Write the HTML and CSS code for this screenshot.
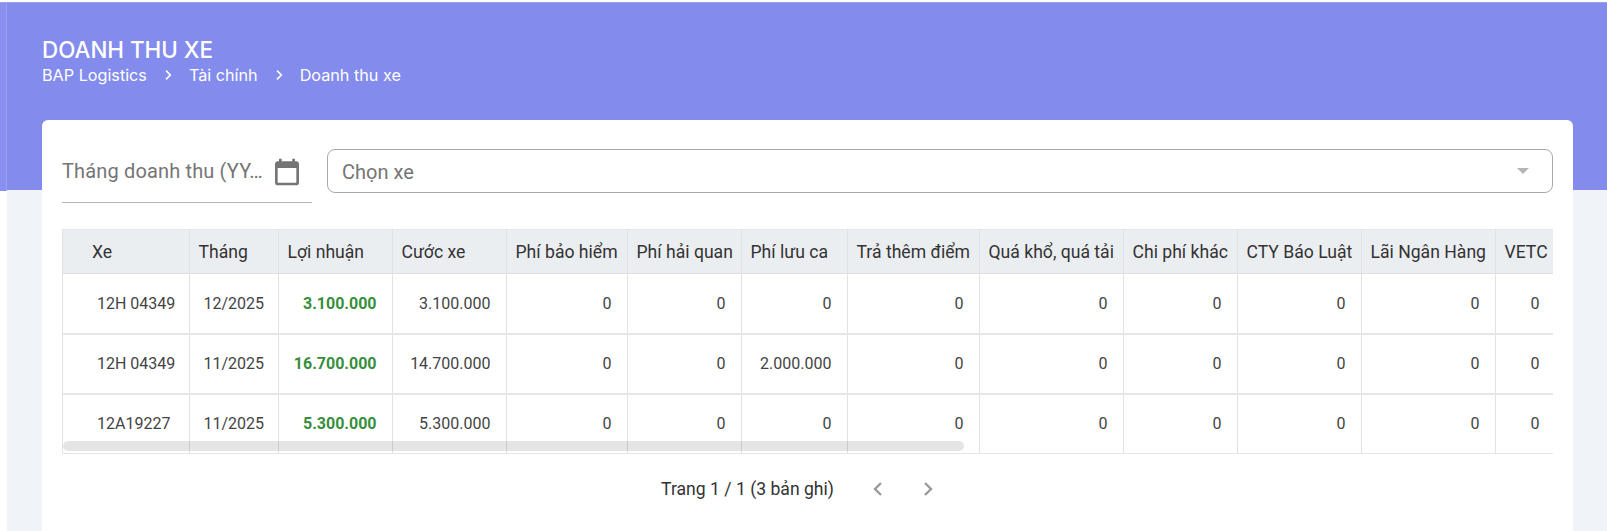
FILE: index.html
```html
<!DOCTYPE html>
<html lang="vi">
<head>
<meta charset="utf-8">
<title>Doanh thu xe</title>
<link rel="stylesheet" href="styles.css">
</head>
<body>
<div class="page">
  <aside class="rail"></aside>
  <main class="main">
    <header class="hero">
      <h1 class="title">DOANH THU XE</h1>
      <nav class="crumbs">
        <span>BAP Logistics</span>
        <svg class="crumb-sep" viewBox="0 0 24 24"><path d="M9 5.5 15.5 12 9 18.5" /></svg>
        <span>Tài chính</span>
        <svg class="crumb-sep" viewBox="0 0 24 24"><path d="M9 5.5 15.5 12 9 18.5" /></svg>
        <span>Doanh thu xe</span>
      </nav>
    </header>
    <section class="card">
      <div class="filters">
        <div class="date-field">
          <span class="date-text">Tháng doanh thu (YY…</span>
          <svg class="cal" viewBox="0 0 24 24"><path d="M19 4h-1V2h-2v2H8V2H6v2H5c-1.1 0-2 .9-2 2v14c0 1.1.9 2 2 2h14c1.1 0 2-.9 2-2V6c0-1.1-.9-2-2-2zm0 16H5V9h14v11z"/></svg>
        </div>
        <div class="select-field">
          <span class="select-text">Chọn xe</span>
          <span class="caret"></span>
        </div>
      </div>
      <div class="table-wrap">
        <table class="grid">
          <colgroup>
            <col class="c1"><col class="c2"><col class="c3"><col class="c4"><col class="c5"><col class="c6"><col class="c7"><col class="c8"><col class="c9"><col class="c10"><col class="c11"><col class="c12"><col class="c13">
          </colgroup>
          <thead>
            <tr>
              <th class="th-xe">Xe</th><th>Tháng</th><th>Lợi nhuận</th><th>Cước xe</th><th>Phí bảo hiểm</th><th>Phí hải quan</th><th>Phí lưu ca</th><th>Trả thêm điểm</th><th>Quá khổ, quá tải</th><th>Chi phí khác</th><th>CTY Báo Luật</th><th>Lãi Ngân Hàng</th><th>VETC</th>
            </tr>
          </thead>
          <tbody>
            <tr>
              <td class="left td-xe">12H 04349</td><td class="left td-month">12/2025</td><td class="profit">3.100.000</td><td>3.100.000</td><td>0</td><td>0</td><td>0</td><td>0</td><td>0</td><td>0</td><td>0</td><td>0</td><td>0</td>
            </tr>
            <tr>
              <td class="left td-xe">12H 04349</td><td class="left td-month">11/2025</td><td class="profit">16.700.000</td><td>14.700.000</td><td>0</td><td>0</td><td>2.000.000</td><td>0</td><td>0</td><td>0</td><td>0</td><td>0</td><td>0</td>
            </tr>
            <tr>
              <td class="left td-xe">12A19227</td><td class="left td-month">11/2025</td><td class="profit">5.300.000</td><td>5.300.000</td><td>0</td><td>0</td><td>0</td><td>0</td><td>0</td><td>0</td><td>0</td><td>0</td><td>0</td>
            </tr>
          </tbody>
        </table>
        <div class="scroll-thumb"></div>
      </div>
      <div class="pager">
        <span class="pager-text">Trang 1 / 1 (3 bản ghi)</span>
        <svg class="pager-btn" viewBox="0 0 24 24"><path d="M15 6 9 12l6 6"/></svg>
        <svg class="pager-btn" viewBox="0 0 24 24"><path d="M9 6l6 6-6 6"/></svg>
      </div>
    </section>
  </main>
</div>
</body>
</html>
```
FILE: styles.css
```css
* { box-sizing: border-box; }
html, body { margin: 0; padding: 0; height: 100%; overflow: hidden; background: #fff; }
body { font-family: Roboto, "Liberation Sans", sans-serif; }
.page { display: flex; height: 531px; padding-top: 2px; }
.rail { width: 7px; flex: none; }
.rail::before { content: ""; display: block; height: 188px; background: #8a90f0; border-right: 1px solid #9aa0f2; border-top: 1px solid #9aa0f2; }
.main { flex: 1; background: linear-gradient(#9aa0f2 0 1px, #838bec 1px 188px, #f0f4f8 188px); padding: 0 34px 0 35px; min-width: 0; }
.hero { height: 118px; padding-top: 36px; color: #fff; font-family: Inter, sans-serif; }
.title { margin: 0; font-size: 22.4px; line-height: 24px; font-weight: 500; }
.crumbs { display: flex; align-items: center; font-size: 16.2px; line-height: 22px; margin-top: 2px; }
.crumb-sep { width: 16px; height: 16px; margin: 0 13px; fill: none; stroke: #fff; stroke-width: 2.4; }
.card { background: #fff; border-radius: 6px 6px 0 0; height: 411px; padding: 29px 20px 0 20px; }
.filters { display: flex; align-items: flex-start; gap: 15px; height: 80px; }
.date-field { width: 250px; height: 54px; flex: none; border-bottom: 1px solid #b5b5b5; display: flex; align-items: center; justify-content: space-between; padding: 0 9px 9px 0; }
.date-text { font-size: 20px; color: #757575; white-space: nowrap; letter-spacing: .15px; }
.cal { width: 32px; height: 32px; fill: #757575; flex: none; margin-top: 2px; }
.select-field { flex: 1; height: 44px; border: 1px solid #a8a8a8; border-radius: 8px; display: flex; align-items: center; justify-content: space-between; padding: 0 23px 0 14px; }
.select-text { font-size: 20px; color: #757575; padding-top: 2px; }
.caret { width: 0; height: 0; border-left: 6.5px solid transparent; border-right: 6.5px solid transparent; border-top: 6.5px solid #b5b5b5; }
.table-wrap { position: relative; height: 225px; overflow: hidden; border-left: 1px solid #e2e2e2; }
.grid { border-collapse: collapse; table-layout: fixed; width: 1492px; font-size: 16px; color: #444; }
.c1 { width: 126px; } .c2 { width: 89px; } .c3 { width: 114px; } .c4 { width: 114px; }
.c5 { width: 121px; } .c6 { width: 114px; } .c7 { width: 106px; } .c8 { width: 132px; }
.c9 { width: 144px; } .c10 { width: 114px; } .c11 { width: 124px; } .c12 { width: 134px; } .c13 { width: 60px; }
.grid th { height: 44px; background: #ebeef1; border-right: 1px solid #dfe2e5; border-top: 1px solid #e6e8ea; border-bottom: 1px solid #dcdfe2; font-weight: 400; font-size: 17.6px; text-align: left; padding: 0 9px; white-space: nowrap; color: #333; }
.grid .th-xe { padding-left: 29px; }
.grid td { height: 60px; border-right: 1px solid #e2e2e2; border-bottom: 2px solid #e6e6e6; text-align: right; padding: 0 15px 0 9px; white-space: nowrap; }
.grid td.left { text-align: left; }
.grid td.td-xe { padding-left: 34px; }
.grid td.td-month { padding-left: 14px; }
.grid td.profit { color: #388e3c; font-weight: 700; }
.scroll-thumb { position: absolute; left: 0; top: 212px; width: 901px; height: 10px; border-radius: 5px; background: rgba(0,0,0,.1); }
.pager { display: flex; align-items: center; justify-content: center; height: 70px; font-size: 17.6px; color: #333; padding-right: 14px; }
.pager-text { margin-right: 32px; }
.pager-btn { width: 24px; height: 24px; fill: none; stroke: #999; stroke-width: 2.4; }
.pager-btn + .pager-btn { margin-left: 26px; }
```
